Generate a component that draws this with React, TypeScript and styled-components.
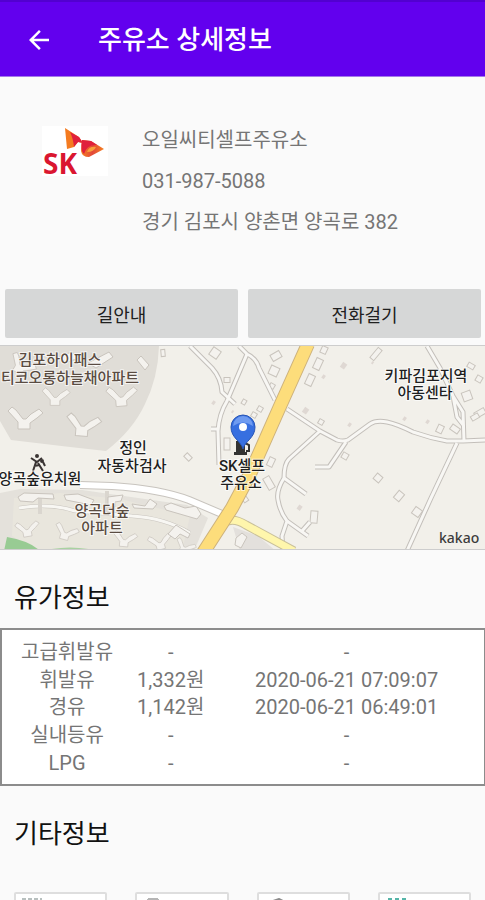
import React from "react";
import styled, { createGlobalStyle } from "styled-components";
import { MdArrowBack } from "react-icons/md";

const GlobalStyle = createGlobalStyle`
  * { box-sizing: border-box; }
  body {
    margin: 0;
    background: #fafafa;
    font-family: Roboto, "Noto Sans CJK KR", sans-serif;
  }
`;

const Screen = styled.div`
  display: flex;
  flex-direction: column;
  height: 100vh;
  overflow: hidden;
`;

const AppBar = styled.header`
  display: flex;
  align-items: center;
  flex: none;
  height: 77px;
  padding: 2px 24px 0;
  gap: 44px;
  background: #6200ee;
  border-top: 2px solid #5200d0;
  border-bottom: 1px solid #a478ea;
`;

const BackButton = styled.button`
  display: flex;
  padding: 0;
  border: 0;
  background: none;
  color: #fff;
  font-size: 30px;
  cursor: pointer;
`;

const Title = styled.h1`
  margin: 0;
  font-size: 26px;
  font-weight: 500;
  line-height: 36px;
  color: #fff;
`;

const Content = styled.main`
  flex: 1;
  min-height: 0;
  overflow-y: auto;
  scrollbar-width: none;
`;

const Station = styled.section`
  display: flex;
  align-items: flex-start;
  gap: 34px;
  padding: 49px 16px 53px 42px;
`;

const LogoArt = styled.svg`
  flex: none;
  width: 66px;
  height: 52px;
`;

const StationText = styled.div`
  display: flex;
  flex-direction: column;
  gap: 13px;
  font-size: 20px;
  line-height: 28px;
  color: #757575;
`;

const Line = styled.p`
  margin: 0;
`;

const Actions = styled.div`
  display: grid;
  grid-template-columns: 1fr 1fr;
  gap: 10px;
  padding: 0 4px 7px 5px;
`;

const ActionButton = styled.button`
  height: 49px;
  padding: 0;
  border: 0;
  border-radius: 2px;
  background: #d6d7d7;
  color: #202020;
  font-family: inherit;
  font-size: 18px;
  cursor: pointer;
`;

const MapArt = styled.svg`
  display: block;
  width: 100%;
  height: 205px;
  border-top: 1px solid #cdcdcd;
  border-bottom: 1px solid #cdcdcd;
`;

const SectionTitle = styled.h2`
  margin: 0;
  padding: 29px 14px 11px;
  font-size: 26px;
  font-weight: 400;
  line-height: 38px;
  color: #111;
`;

const PriceTable = styled.table`
  width: 100%;
  height: 158px;
  table-layout: fixed;
  padding: 9px 0 7px;
  border: 2px solid #8c8c8c;
  border-width: 2px 1px 2px 2px;
  border-collapse: separate;
  border-spacing: 0;
  background: #fff;
  color: #757575;
  font-size: 20px;
  line-height: 27px;
`;

const Column = styled.col<{ $share: number }>`
  width: ${(p) => p.$share}%;
`;

const NameCell = styled.th`
  padding: 0;
  font-weight: 400;
`;

const Cell = styled.td`
  padding: 0;
  text-align: center;
  white-space: nowrap;
`;

const Facilities = styled.div`
  display: grid;
  grid-template-columns: repeat(4, 1fr);
  gap: 28px;
  padding: 28px 14px;
`;

const Facility = styled.div`
  height: 94px;
  padding: 4px 6px;
  border: 2px solid #dedede;
  border-radius: 2px;
  background: #fff;
`;

const FacilityArt = styled.svg`
  display: block;
  width: 28px;
  height: 28px;
`;

const prices = [
  ["고급휘발유", "-", "-"],
  ["휘발유", "1,332원", "2020-06-21 07:09:07"],
  ["경유", "1,142원", "2020-06-21 06:49:01"],
  ["실내등유", "-", "-"],
  ["LPG", "-", "-"],
];

const lanes = [
  "M287 63L320 85L337 94Q343 96 348 94L370 78Q376 74 387 76Q397 78 413 86Q430 92 447 95L463 95L485 94",
  "M320 85L289 113Q284 118 284 132Q276 145 278 154Q280 166 287 175L282 190L283 205",
  "M284 132L306 148",
  "M287 175L308 190M302 185L310 176",
  "M346 96L329 121L315 121",
  "M457 97L431 152L407 205",
  "M427 0L440 22L453 50L463 66L464 95M453 50L457 71L464 80",
  "M239 0L247 8Q256 12 259 22L275 54",
  "M247 8L227 55Q219 68 218 85L219 119M211 83L218 83",
  "M190 0L212 22Q221 32 222 46L235 58",
];

// x, y, width, height, rotation
const houses = [
  [276, 10, 10, 7, -30], [274, 25, 9, 9, 25], [318, 18, 7, 11, 25], [310, 34, 7, 11, 25],
  [324, 4, 6, 7, 25], [376, 8, 5, 13, 40], [215, 7, 9, 9, 35], [227, 34, 6, 5, 0],
  [227, 98, 6, 12, 0], [188, 111, 5, 7, -45], [163, 7, 4, 7, -5], [244, 56, 4, 5, 30],
  [260, 63, 5, 5, 30], [254, 69, 5, 5, 30], [272, 40, 5, 5, 30], [321, 76, 5, 5, 30],
  [345, 110, 6, 6, 30], [271, 116, 6, 9, 25], [269, 137, 7, 13, -30], [314, 171, 7, 12, 5],
  [378, 132, 7, 7, 40], [399, 150, 7, 9, 40], [417, 166, 8, 8, 35], [440, 83, 6, 8, 25],
  [455, 83, 9, 6, 35], [467, 50, 9, 9, -20], [471, 20, 7, 5, 30], [479, 33, 6, 6, 30],
  [480, 67, 11, 6, -30], [475, 71, 8, 5, -30], [245, 153, 5, 6, -35],
];

const specks = [
  [344, 20, 6], [324, 31, 4], [306, 65, 6], [350, 79, 4], [405, 73, 4],
  [428, 76, 4], [300, 162, 5], [214, 57, 4], [233, 66, 3], [373, 17, 3],
];

// x, y, rotation, scale
const towers = [
  [24, 75, 0, 1], [55, 53, 0, 0.8], [82, 82, 5, 1], [121, 53, -5, 0.9],
  [20, 21, 30, 0.8], [27, 185, -10, 0.7], [65, 188, 15, 0.7],
  [124, 195, 5, 0.7], [160, 198, -15, 0.7], [184, 202, 20, 0.6],
];

const placeNames: [number, number, string, boolean][] = [
  [60, 19, "김포하이패스", true],
  [70, 37, "티코오롱하늘채아파트", true],
  [133, 107, "정인", false],
  [132, 125, "자동차검사", false],
  [40, 138, "양곡숲유치원", false],
  [102, 170, "양곡더숲", true],
  [102, 187, "아파트", true],
  [242, 125, "SK셀프", false],
  [241, 142, "주유소", false],
  [426, 35, "키파김포지역", false],
  [425, 52, "아동센타", false],
];

function StationLogo() {
  return (
    <LogoArt viewBox="0 0 66 52" role="img" aria-label="SK">
      <defs>
        <linearGradient id="wing" x1="0" x2="1">
          <stop offset="0" stopColor="#f58220" />
          <stop offset="0.5" stopColor="#e2483a" />
          <stop offset="1" stopColor="#f58220" />
        </linearGradient>
      </defs>
      <rect width="66" height="50" fill="#fff" />
      <path d="M23 2L37 11L41 17L36 16L32 21L25 23Z" fill="#f47b20" />
      <path d="M28 6L37 11L41 17L36 16L32 21Q31 12 28 6Z" fill="#e0203c" />
      <path d="M40 14L49 15L62 23L47 31Q40 31 39 25Z" fill="url(#wing)" />
      <path d="M40 14L49 15L55 19Q45 18 42 28Q38 25 40 14Z" fill="#e0203c" />
      <path d="M45 26Q47 20 54 21Q52 26 45 26Z" fill="#f9a03c" />
      <text x="1" y="48" fontFamily="Open Sans, sans-serif" fontSize="28" fontWeight="700" fill="#da1630">SK</text>
    </LogoArt>
  );
}

function StationMap() {
  return (
    <MapArt viewBox="0 0 485 203" preserveAspectRatio="xMidYMid slice" role="img" aria-label="지도">
      <rect width="485" height="205" fill="#f2f0ea" />
      <path d="M0 0H159Q158 32 145 58Q133 84 106 105L70 101L11 94L0 75Z" fill="#e0ddd7" />
      <path d="M0 147L20 143L82 144L187 159L208 172L194 205H0Z" fill="#e4e1db" />
      <path d="M14 152L60 147L120 153L190 170L182 205H36L12 190Z" fill="#e9e6dd" />
      <path d="M7 191Q30 195 40 205H4Z" fill="#98cb93" />
      <path d="M42 205Q70 198 98 205Z" fill="#a9d2a1" />
      <path d="M240 205L233 181L258 190L276 205Z" fill="#e3e0dc" />

      <g fill="none" stroke="#c9c5bf" strokeWidth="4">
        <path d="M19 162Q50 157 75 165L132 170Q165 172 190 187" />
        <path d="M19 162Q50 157 75 165L132 170Q165 172 190 187" stroke="#f8f7f3" strokeWidth="3" />
        <path d="M40 150V168M107 145V170" stroke="#dad6cf" />
      </g>

      <g fill="#f4f2ee" stroke="#c9c4bd">
        {towers.map(([x, y, r, s], i) => (
          <path
            key={i}
            transform={`translate(${x} ${y}) rotate(${r}) scale(${s})`}
            d="M-6 8V1L-16 -10L-12 -14L-8 -11L-1 -2H2L7 -7L15 -12L19 -8L13 -3L6 2V8Z"
          />
        ))}
        <path d="M137 14L141 10L149 19L145 24Z" />
        <path d="M88 17L109 6L113 11L96 22Z" />
        <path d="M60 10L72 6L79 12L65 17Z" />
        <path d="M18 151L24 147L53 148L54 153L38 152L33 156L20 155Z" />
        <path d="M64 149L78 148L94 154L91 159L66 154Z" />
        <path d="M132 158L145 160L150 153L157 158L153 163L134 162Z" />
        <path d="M164 160L171 157L185 162L196 160L201 168L197 173L166 164Z" />
        <path d="M108 151L123 149L121 155L115 156V161H108Z" />
        <path d="M168 188L176 179L190 188L188 192L180 188L175 193Z" />
        <path d="M236 192L242 187L247 191L241 202L235 199Z" />
        {houses.map(([x, y, w, h, r], i) => (
          <rect key={i} x={x - w / 2} y={y - h / 2} width={w} height={h} transform={`rotate(${r} ${x} ${y})`} />
        ))}
      </g>
      <g fill="#dfd8d3">
        {specks.map(([x, y, s], i) => (
          <rect key={i} x={x - s / 2} y={y - s / 2} width={s - 1} height={s} transform={`rotate(35 ${x} ${y})`} />
        ))}
      </g>

      <g fill="none" strokeLinejoin="round">
        {lanes.map((d) => <path key={d} d={d} stroke="#c3bfba" strokeWidth="5" />)}
        {lanes.map((d) => <path key={d} d={d} stroke="#f8f7f4" strokeWidth="3" />)}
        <path d="M80 139L112 140Q160 143 189 154L222 168" stroke="#c8c4be" strokeWidth="8" />
        <path d="M80 139L112 140Q160 143 189 154L222 168" stroke="#fff" strokeWidth="6" />
        <path d="M222 178Q232 170 246 179L294 205" stroke="#c9c09a" strokeWidth="9" />
        <path d="M222 178Q232 170 246 179L294 205" stroke="#fff6ac" strokeWidth="7" />
        <path d="M308 -2L281 58L250 128L232 162L203 207" stroke="#cdb27c" strokeWidth="14" />
        <path d="M308 -2L281 58L250 128L232 162L203 207" stroke="#fddd7b" strokeWidth="12" />
      </g>

      <g fill="none" stroke="#3a3433" strokeWidth="2">
        <path d="M31 112L37 116L42 112M36 116L33 125M38 117L43 125M34 120L40 119M43 116L45 120" />
        <circle cx="37" cy="110" r="1" />
        <circle cx="42" cy="115" r="1" />
      </g>

      <path d="M236 95H245V106H247V109H234V106H236Z" fill="#333" />
      <path d="M245 97L249 99V105H246" fill="none" stroke="#333" strokeWidth="2" />

      <g
        fontFamily="Roboto, Noto Sans CJK KR, sans-serif"
        fontSize="15"
        fontWeight="500"
        textAnchor="middle"
        stroke="#fff"
        strokeWidth="2"
        strokeOpacity="0.7"
        paintOrder="stroke"
      >
        {placeNames.map(([x, y, name, soft]) => (
          <text key={name} x={x} y={y} fill={soft ? "#5a4c42" : "#1f1f1f"}>{name}</text>
        ))}
      </g>

      <path d="M243 103C241 95 231 92 231 81A12 12 0 0 1 255 81C255 92 245 95 243 103Z" fill="#376fe0" stroke="#2855b4" />
      <path d="M233 80A10 10 0 0 1 253 80Q243 73 233 80Z" fill="#6f9bf0" />
      <circle cx="243" cy="81" r="4" fill="#fff" />

      <text x="439" y="197" fontFamily="Noto Sans, sans-serif" fontSize="14" fontWeight="500" fill="#3c3c3c">kakao</text>
    </MapArt>
  );
}

const facilityIcons = [
  { name: "세차장", color: "#b8c0bf", d: "M0 1H4M6 1H10M12 1H16M18 1H20M2 8H24V20H2Z" },
  { name: "경정비", color: "#b5b5b5", d: "M5 1H15M5 1V12H15V1" },
  { name: "편의점", color: "#8c8c8c", d: "M8 3L14 1L18 3M11 3V16" },
  { name: "24시간", color: "#55b5a8", d: "M2 1H6M9 1H13M16 1H20M2 6H20V18H2Z" },
];

export default function App() {
  return (
    <>
      <GlobalStyle />
      <Screen>
        <AppBar>
          <BackButton type="button" aria-label="뒤로">
            <MdArrowBack />
          </BackButton>
          <Title>주유소 상세정보</Title>
        </AppBar>
        <Content>
          <Station>
            <StationLogo />
            <StationText>
              <Line>오일씨티셀프주유소</Line>
              <Line>031-987-5088</Line>
              <Line>경기 김포시 양촌면 양곡로 382</Line>
            </StationText>
          </Station>
          <Actions>
            <ActionButton type="button">길안내</ActionButton>
            <ActionButton type="button">전화걸기</ActionButton>
          </Actions>
          <StationMap />
          <SectionTitle>유가정보</SectionTitle>
          <PriceTable>
            <colgroup>
              <Column $share={27} />
              <Column $share={16} />
              <Column $share={57} />
            </colgroup>
            <tbody>
              {prices.map(([name, price, time]) => (
                <tr key={name}>
                  <NameCell scope="row">{name}</NameCell>
                  <Cell>{price}</Cell>
                  <Cell>{time}</Cell>
                </tr>
              ))}
            </tbody>
          </PriceTable>
          <SectionTitle>기타정보</SectionTitle>
          <Facilities>
            {facilityIcons.map(({ name, color, d }) => (
              <Facility key={name} role="img" aria-label={name}>
                <FacilityArt viewBox="0 0 28 28" fill="none" stroke={color} strokeWidth="2">
                  <path d={d} />
                </FacilityArt>
              </Facility>
            ))}
          </Facilities>
        </Content>
      </Screen>
    </>
  );
}
